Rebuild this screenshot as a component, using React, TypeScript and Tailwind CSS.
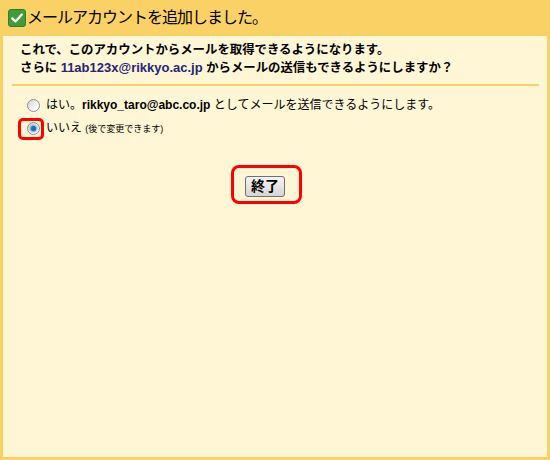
export default function App() {
  return (
    <div
      className="relative flex h-[460px] w-[550px] flex-col bg-[#fad165] px-[3px] pb-[3px] text-black"
      style={{ fontFamily: '"Liberation Sans", "Noto Sans CJK JP", sans-serif' }}
    >
      {/* header */}
      <div className="flex h-[36px] items-center pl-[5px]">
        <span className="flex h-[18px] w-[18px] items-center justify-center rounded-[3px] border border-[#2f7f2d] bg-[#3e9c3b]">
          <svg viewBox="0 0 16 16" className="h-[14px] w-[14px]">
            <path d="M2.5 8.5 L6.3 12 L13.5 4" fill="none" stroke="#fff" strokeWidth="2.6" strokeLinecap="round" strokeLinejoin="round" />
          </svg>
        </span>
        <span className="ml-[1px] text-[16px] leading-[18px] tracking-[-1px]">メールアカウントを追加しました。</span>
      </div>

      {/* panel */}
      <div className="flex-1 bg-[#fff6d6] pt-[5px]">
        <div className="pl-[17px] text-[12.4px] font-bold leading-[18px]">
          <p>これで、このアカウントからメールを取得できるようになります。</p>
          <p>
            さらに <span className="text-[13px] text-[#24247a]">11ab123x@rikkyo.ac.jp</span> からメールの送信もできるようにしますか？
          </p>
        </div>

        <div className="ml-[9px] mr-[8px] mt-[7px] h-[2px] bg-[#fad165]" />

        <div className="mt-[10px] pl-[24px] text-[12px]">
          <label className="flex h-[18px] items-center gap-[6px]">
            <Radio />
            <span>
              はい。<b>rikkyo_taro@abc.co.jp</b> としてメールを送信できるようにします。
            </span>
          </label>
          <label className="mt-[5px] flex h-[18px] items-center gap-[6px]">
            <Radio checked />
            <span>
              いいえ <span className="text-[9px]">(後で変更できます)</span>
            </span>
          </label>
        </div>

        <div className="ml-[242px] mt-[37px]">
          <button
            type="button"
            className="h-[21px] w-[40px] rounded-[3px] border border-[#707070] bg-gradient-to-b from-[#f4f4f4] to-[#d6d6d6] text-[14px] font-bold leading-[19px]"
          >
            終了
          </button>
        </div>
      </div>

      {/* red annotation boxes */}
      <div className="absolute left-[18px] top-[118px] h-[22px] w-[26px] rounded-[5px] border-[3px] border-[#ff0000]" />
      <div className="absolute left-[231px] top-[165px] h-[39px] w-[71px] rounded-[8px] border-[3px] border-[#ff0000]" />
    </div>
  );
}

function Radio({ checked = false }: { checked?: boolean }) {
  return (
    <span className="flex h-[13px] w-[13px] shrink-0 items-center justify-center rounded-full border border-[#8e8f8f] bg-gradient-to-br from-[#d0d0d0] via-[#f0f0f0] to-[#ffffff]">
      {checked ? <span className="h-[5px] w-[5px] rounded-full bg-[#1b6fb0] shadow-[0_0_2px_1px_#4aa3e0]" /> : null}
    </span>
  );
}
